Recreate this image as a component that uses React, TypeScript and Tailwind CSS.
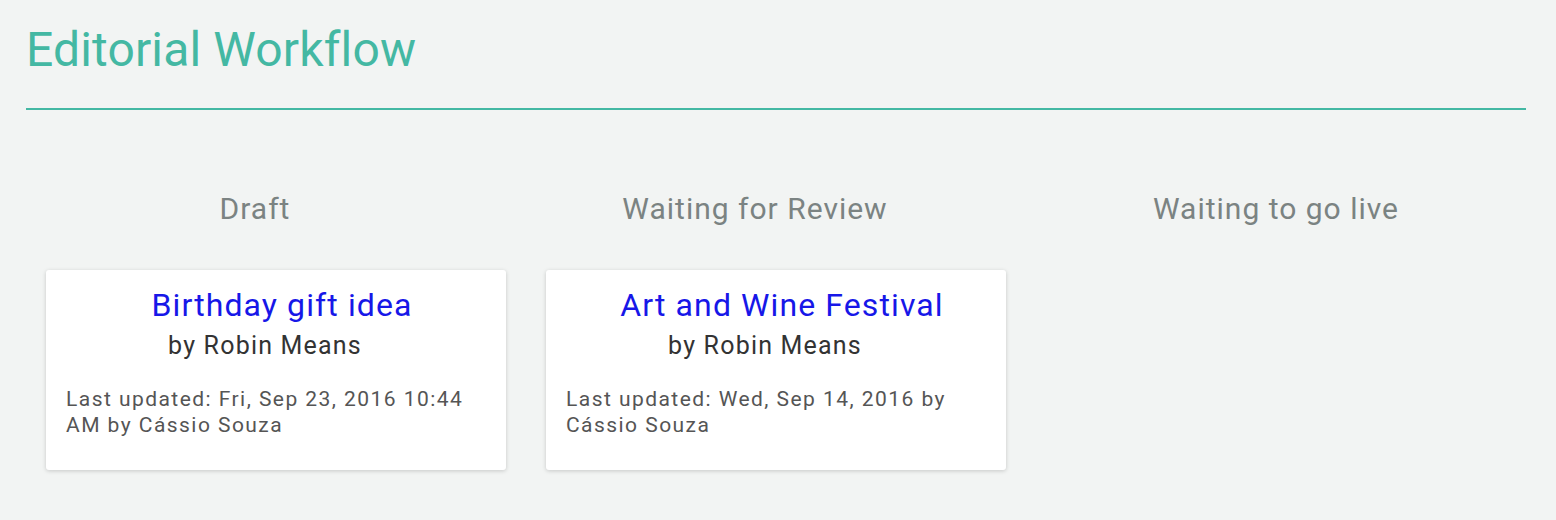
import React from "react";

type Entry = { title: string; author: string; updated: string };

const columns: { name: string; pad: string; entries: Entry[] }[] = [
  {
    name: "Draft",
    pad: "pr-[42px]",
    entries: [
      {
        title: "Birthday gift idea",
        author: "Robin Means",
        updated: "Last updated: Fri, Sep 23, 2016 10:44 AM by Cássio Souza",
      },
    ],
  },
  {
    name: "Waiting for Review",
    pad: "pr-[42px]",
    entries: [
      {
        title: "Art and Wine Festival",
        author: "Robin Means",
        updated: "Last updated: Wed, Sep 14, 2016 by Cássio Souza",
      },
    ],
  },
  { name: "Waiting to go live", pad: "", entries: [] },
];

function Card({ entry }: { entry: Entry }) {
  return (
    <div className="bg-white rounded-[3px] shadow-[0_1px_4px_rgba(0,0,0,0.18)] px-5 pt-[15px] pb-[32px]">
      <h2 className="pl-[12px] text-center text-[32px] leading-[40px] tracking-[1.1px] text-[#1717e8]">
        {entry.title}
      </h2>
      <p className="mt-[6px] text-center text-[25px] leading-[30px] tracking-[1.2px] text-[#333] pr-[22px]">
        by {entry.author}
      </p>
      <p className="mt-[25px] text-[21px] leading-[26px] tracking-[1.45px] text-[#555]">
        {entry.updated}
      </p>
    </div>
  );
}

export default function App() {
  return (
    <div className="min-h-[520px] bg-[#f2f4f3] px-[26px] pr-[30px] font-['Roboto',sans-serif]">
      <h1 className="pt-[18px] pb-[26px] text-[48px] leading-[64px] tracking-[0.15px] text-[#44b8a3]">
        Editorial Workflow
      </h1>
      <div className="h-[2px] bg-[#44b8a3]" />
      <div className="grid grid-cols-3 mt-[79px]">
        {columns.map((col) => (
          <div key={col.name} className="px-5">
            <h3 className={`text-center text-[30px] leading-[40px] tracking-[1px] text-[#7b8382] ${col.pad}`}>
              {col.name}
            </h3>
            <div className="mt-[41px] flex flex-col gap-5">
              {col.entries.map((e) => (
                <Card key={e.title} entry={e} />
              ))}
            </div>
          </div>
        ))}
      </div>
    </div>
  );
}
